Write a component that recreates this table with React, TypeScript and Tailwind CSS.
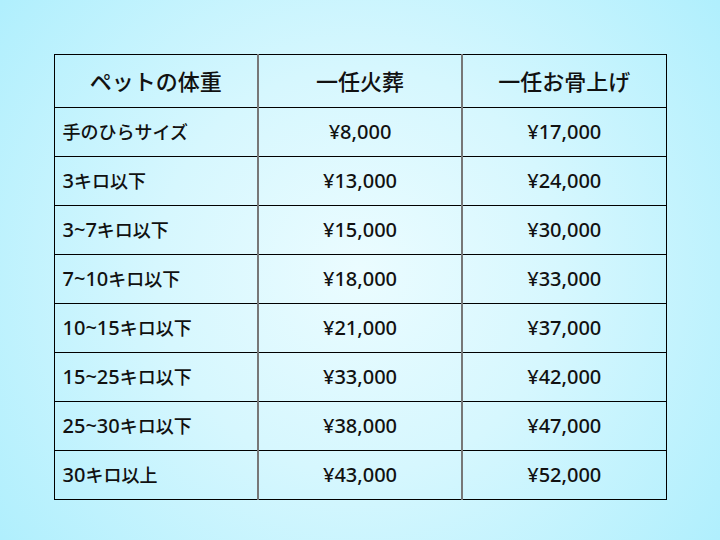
function Mixed({ text }: { text: string }) {
  const parts = text.match(/[0-9~]+|[^0-9~]+/g) || [];
  return (
    <>
      {parts.map((p, i) =>
        /[0-9~]/.test(p) ? (
          <span key={i} className="text-[20px]">{p}</span>
        ) : (
          <span key={i} className="text-[18px]">{p}</span>
        )
      )}
    </>
  );
}

export default function App() {
  const rows: [string, string, string][] = [
    ["手のひらサイズ", "¥8,000", "¥17,000"],
    ["3キロ以下", "¥13,000", "¥24,000"],
    ["3~7キロ以下", "¥15,000", "¥30,000"],
    ["7~10キロ以下", "¥18,000", "¥33,000"],
    ["10~15キロ以下", "¥21,000", "¥37,000"],
    ["15~25キロ以下", "¥33,000", "¥42,000"],
    ["25~30キロ以下", "¥38,000", "¥47,000"],
    ["30キロ以上", "¥43,000", "¥52,000"],
  ];
  return (
    <div
      className="w-[720px] h-[540px] flex items-start justify-center pt-[54px] bg-[radial-gradient(circle_at_center,#ebfcff_0%,#d6f7fe_45%,#b0effd_100%)] text-[#111]"
      style={{ fontFamily: '"Noto Sans", "Noto Sans CJK JP", sans-serif' }}
    >
      <table className="w-[612px] border-collapse border border-black table-fixed">
        <thead>
          <tr className="h-[53px] border-b border-black">
            <th className="w-[204px] text-[22px] font-medium text-center border-r-2 border-[#777]">ペットの体重</th>
            <th className="w-[204px] text-[22px] font-medium text-center border-r-2 border-[#777]">一任火葬</th>
            <th className="w-[204px] text-[22px] font-medium text-center">一任お骨上げ</th>
          </tr>
        </thead>
        <tbody>
          {rows.map((r, i) => (
            <tr key={i} className="h-[49px] border-b border-black">
              <td className="font-medium text-left pl-[8px] border-r-2 border-[#777] leading-none">
                <Mixed text={r[0]} />
              </td>
              <td className="text-[20px] font-medium text-center border-r-2 border-[#777] leading-none">{r[1]}</td>
              <td className="text-[20px] font-medium text-center leading-none">{r[2]}</td>
            </tr>
          ))}
        </tbody>
      </table>
    </div>
  );
}
